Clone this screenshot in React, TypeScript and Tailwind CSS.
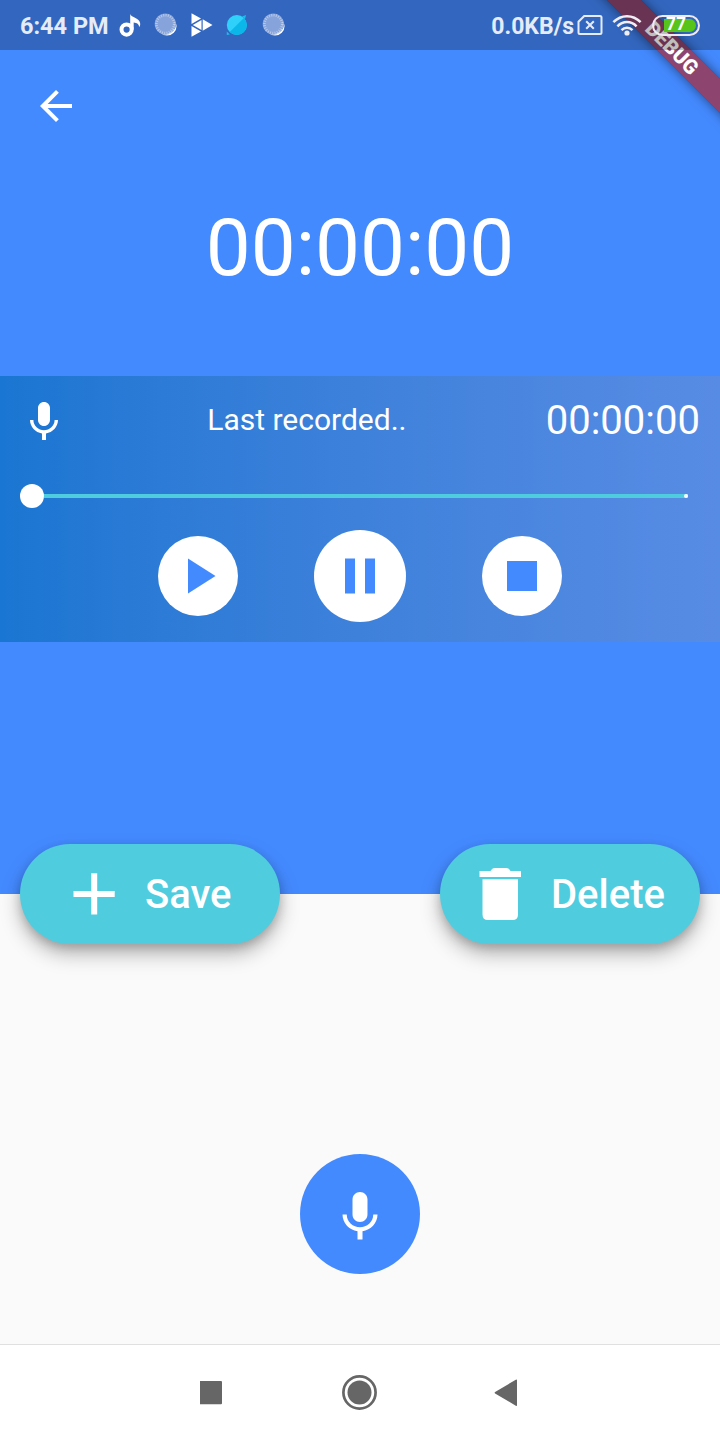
import React from "react";

const MIC =
  "M12 14c1.66 0 2.99-1.34 2.99-3L15 5c0-1.66-1.34-3-3-3S9 3.34 9 5v6c0 1.66 1.34 3 3 3zm5.3-3c0 3-2.54 5.1-5.3 5.1S6.7 14 6.7 11H5c0 3.41 2.72 6.23 6 6.72V21h2v-3.28c3.28-.48 6-3.3 6-6.72h-1.7z";

function Icon({ d, className }: { d: string; className: string }) {
  return (
    <svg viewBox="0 0 24 24" className={className} fill="currentColor" aria-hidden="true">
      <path d={d} />
    </svg>
  );
}

function DottedDisc() {
  return (
    <svg width="24" height="24" viewBox="0 0 24 24" aria-hidden="true">
      <circle cx="13" cy="13" r="9.6" fill="#fff" />
      <circle cx="11.3" cy="11.1" r="10.6" fill="#3367bf" />
      <circle cx="11.3" cy="11.1" r="10.6" fill="#86a4db" />
      <circle cx="11.3" cy="11.1" r="8.9" fill="none" stroke="#b9c9e9" strokeWidth="2.6" strokeDasharray="1 1.33" />
      <path d="M20.6 7.5A10.6 10.6 0 0 1 9 21.4c6.500 1.800 13.600-3.500 11.600-13.900z" fill="#fff" />
    </svg>
  );
}

function StatusBar() {
  return (
    <header className="relative z-10 flex h-[50px] items-center bg-black/25 pl-5 pr-5 text-white">
      <span className="w-[98px] whitespace-nowrap pt-[2px] text-[23.500px] font-bold leading-[28px] text-[#e6ecf7]">6:44 PM</span>
      <svg width="24" height="28" viewBox="0 0 24 28" className="ml-px" aria-hidden="true">
        <circle cx="7.600" cy="18.600" r="5.100" fill="none" stroke="#fff" strokeWidth="4" />
        <path d="M11.200 3c.7 3.400 9.900 4.200 10 9.700.1 1.500-.4 2.600-1.200 3.400.3-3.100-2.300-4.300-5.300-4.700v7.200h-3.500z" fill="#fff" />
      </svg>
      <div className="ml-[11px] flex w-[24px]"><DottedDisc /></div>
      <svg width="24" height="26" viewBox="0 0 24 26" className="ml-3" fill="#fff" aria-hidden="true">
        <path d="M1.500 1.200 11 6.600 1.500 12zM1.500 14 11 19.400 1.500 24.800zM2.800 13l8.700-4.900v9.800zM12.700 7.300 22.500 13l-9.800 5.700z" />
      </svg>
      <svg width="24" height="24" viewBox="0 0 24 24" className="ml-3" aria-hidden="true">
        <circle cx="10.800" cy="12" r="10" fill="#2fd1fb" />
        <path d="M17.900 4.900A10 10 0 0 1 3.700 19.100z" fill="#0bb7e8" />
        <path d="M16 3.500 20 2l-1 4zM.8 18.500l3 3L.8 22z" fill="#18bfee" />
      </svg>
      <div className="ml-3 flex w-[24px]"><DottedDisc /></div>
      <span className="ml-auto whitespace-nowrap pt-[3px] text-[23px] font-bold leading-[28px] text-[#e6ecf7]">0.0KB/s</span>
      <svg width="26" height="20" viewBox="0 0 26 20" className="ml-[3px]" fill="none" stroke="#e6ecf7" strokeWidth="2" aria-hidden="true">
        <path d="M7.200 1H23a1.500 1.500 0 0 1 1.500 1.500v15A1.500 1.500 0 0 1 23 19H3a1.500 1.500 0 0 1-1.500-1.500V6.700z" />
        <path d="M9.200 6.200l7.600 7.600M16.800 6.200l-7.600 7.600" />
      </svg>
      <svg width="30" height="22" viewBox="0 0 30 22" className="ml-[9px]" fill="none" stroke="#f0eef4" strokeWidth="2.500" aria-hidden="true">
        <path d="M1.400 8.200C9.200.1 20.800.1 28.600 8.200M5.400 12.300c5.500-5.700 13.700-5.700 19.200 0M9.500 16.200c3.200-3.200 7.800-3.200 11 0" />
        <circle cx="15" cy="19" r="2.600" fill="#f0eef4" stroke="none" />
      </svg>
      <div className="ml-[10px] flex h-[21px] w-[48px] rounded-full border-2 border-[#efeaf2] p-[2px]">
        <div className="ml-[8px] flex h-[13px] w-[32px] items-center rounded-r-full bg-[#56c41a] pl-[2px] text-[17.500px] font-bold leading-none text-white">77</div>
      </div>
    </header>
  );
}

export default function App() {
  return (
    <div className="relative flex h-[1440px] w-[720px] flex-col overflow-hidden bg-[#fafafa] font-['Roboto',sans-serif] text-white">
      <div className="flex h-[894px] shrink-0 flex-col bg-[#448aff]">
        <StatusBar />
        <div className="h-[130px] pl-8 pt-8">
          <Icon className="size-12" d="M20 11H7.830l5.590-5.590L12 4l-8 8 8 8 1.410-1.410L7.830 13H20v-2z" />
        </div>
        <div className="flex h-[196px] justify-center pt-[21px] text-[80px] leading-[94px]">00:00:00</div>
        <section className="flex h-[266px] flex-col bg-linear-to-r from-[#1976d2] to-[#588ce4]">
          <div className="flex h-[88px] items-center justify-between px-5">
            <Icon className="mt-[4px] size-12" d={MIC} />
            <span className="text-[30px] leading-9">Last recorded..</span>
            <span className="pt-[2px] text-[40px] leading-[48px]">00:00:00</span>
          </div>
          <div className="flex h-16 items-center pl-5 pr-8">
            <div className="size-6 rounded-full bg-white" />
            <div className="flex h-1 flex-1 justify-end bg-[#50ccdf]">
              <div className="size-1 rounded-full bg-white" />
            </div>
          </div>
          <div className="flex h-24 items-center justify-center gap-[76px] text-[#448aff]">
            <button className="flex size-20 items-center justify-center rounded-full bg-white">
              <Icon className="size-[60px]" d="M8 5v14l11-7z" />
            </button>
            <button className="flex size-[92px] items-center justify-center rounded-full bg-white">
              <Icon className="size-[60px]" d="M6 19h4V5H6v14zm8-14v14h4V5h-4z" />
            </button>
            <button className="flex size-20 items-center justify-center rounded-full bg-white">
              <Icon className="size-[60px]" d="M6 6h12v12H6z" />
            </button>
          </div>
        </section>
      </div>

      <div className="relative -mt-[50px] flex justify-between px-5 text-[40px] font-medium leading-[48px]">
        <button className="flex h-[100px] w-[260px] items-center rounded-full bg-[#50ccdf] pl-[53px] shadow-[0_10px_20px_rgba(0,0,0,0.28),0_4px_10px_rgba(0,0,0,0.16)]">
          <svg width="42" height="42" viewBox="0 0 42 42" fill="#fff" aria-hidden="true">
            <path d="M18.200.3h6v17.700h17.500v6H24.200v17.500h-6V24H.5v-6h17.700z" />
          </svg>
          <span className="ml-[30px] pt-[2px]">Save</span>
        </button>
        <button className="flex h-[100px] w-[260px] items-center rounded-full bg-[#50ccdf] pl-[39px] shadow-[0_10px_20px_rgba(0,0,0,0.28),0_4px_10px_rgba(0,0,0,0.16)]">
          <svg width="42" height="54" viewBox="0 0 42 54" fill="#fff" aria-hidden="true">
            <path d="M.5 4H11.500C13 2 13.500 1 16 1H27C29.500 1 30 2 31.500 4H42V10H.5zM3.500 12.300H39V47.500Q39 53 33.500 53H9Q3.500 53 3.500 47.500z" />
          </svg>
          <span className="ml-[30px] pt-[2px]">Delete</span>
        </button>
      </div>

      <div className="flex flex-1 flex-col items-center pt-[210px]">
        <button className="flex size-[120px] items-center justify-center rounded-full bg-[#448aff] pt-[5px]">
          <Icon className="size-[60px]" d={MIC} />
        </button>
      </div>

      <nav className="flex h-24 items-center justify-center border-t border-[#e0e0e0] bg-white text-[#666]">
        <svg width="320" height="36" viewBox="0 0 320 36" fill="currentColor" aria-hidden="true">
          <rect x="-1.300" y="6" width="23.300" height="23.300" rx="1" />
          <circle cx="159.500" cy="17.500" r="16.100" fill="none" stroke="currentColor" strokeWidth="2.700" />
          <circle cx="159.500" cy="17.500" r="12" />
          <path d="M317 5.500v24.500q0 1.300-1.200.7L295.500 18.700q-1.800-1 0-2L315.800 4.800q1.200-.6 1.200.7z" />
        </svg>
      </nav>

      <div className="absolute left-[572px] top-[36px] flex h-6 w-[200px] rotate-45 items-center justify-center bg-[#b71c1c]/63 text-[20.400px] font-black leading-none shadow-[0_0_12px_rgba(0,0,0,0.5)]">
        DEBUG
      </div>
    </div>
  );
}
